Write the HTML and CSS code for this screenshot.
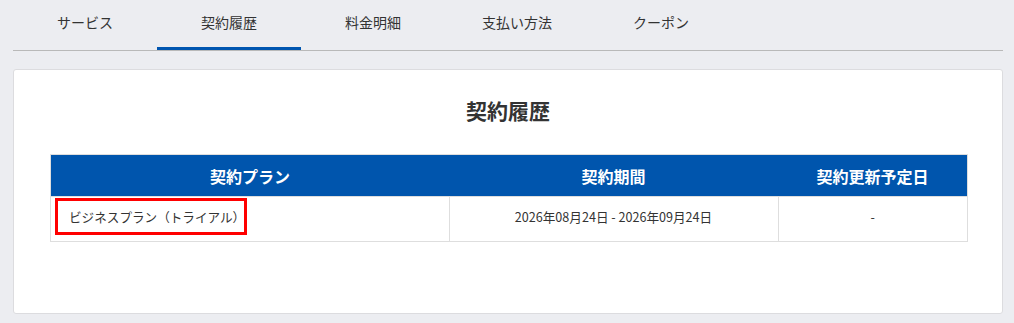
FILE: index.html
```html
<!DOCTYPE html>
<html lang="ja">
<head>
  <meta charset="utf-8">
  <link rel="stylesheet" href="styles.css">
  <title>契約履歴</title>
</head>
<body>
  <div class="page">
    <nav class="tabs">
      <a class="tab" href="#">サービス</a>
      <a class="tab active" href="#">契約履歴</a>
      <a class="tab" href="#">料金明細</a>
      <a class="tab" href="#">支払い方法</a>
      <a class="tab" href="#">クーポン</a>
    </nav>

    <div class="card">
      <h1>契約履歴</h1>
      <table class="history">
        <thead>
          <tr>
            <th class="col-plan">契約プラン</th>
            <th class="col-term">契約期間</th>
            <th class="col-renew">契約更新予定日</th>
          </tr>
        </thead>
        <tbody>
          <tr>
            <td class="plan"><span class="highlight">ビジネスプラン（トライアル）</span></td>
            <td>2026年08月24日 - 2026年09月24日</td>
            <td>-</td>
          </tr>
        </tbody>
      </table>
    </div>
  </div>
</body>
</html>
```

FILE: styles.css
```css
body {
  margin: 0;
  background-color: #ecedf1;
  color: #333;
  font-family: "Noto Sans CJK JP", "Noto Sans", sans-serif;
}

.page {
  padding: 0 11px 0 13px;
}

.tabs {
  display: flex;
  height: 50px;
  border-bottom: 1px solid #b9b9b9;
}

.tab {
  width: 144px;
  height: 47px;
  margin-bottom: -1px;
  line-height: 44px;
  text-align: center;
  font-size: 14px;
  color: #333;
  text-decoration: none;
  border-bottom: 3px solid transparent;
}

.tab.active {
  border-bottom-color: #0055b0;
}

.card {
  margin-top: 18px;
  height: 243px;
  background-color: #fff;
  border: 1px solid #dcdcdf;
  border-radius: 3px;
  padding: 0 36px;
}

h1 {
  margin: 25px 0 29px;
  font-size: 21px;
  line-height: 30px;
  text-align: center;
  font-weight: bold;
  color: #333;
}

.history {
  width: 916px;
  border-collapse: collapse;
  table-layout: fixed;
  border: 1px solid #dedede;
}

.history th {
  height: 41px;
  padding: 0;
  background-color: #0055ad;
  color: #fff;
  font-size: 16px;
  font-weight: bold;
  text-align: center;
}

.col-plan { width: 398px; }
.col-term { width: 329px; }
.col-renew { width: 189px; }

.history td {
  height: 45px;
  padding: 11px 5px 0;
  vertical-align: top;
  text-align: center;
  font-size: 12.6px;
  line-height: 18px;
  border: 1px solid #dedede;
  box-sizing: border-box;
}

.history td.plan {
  padding: 1px 4px 0;
  text-align: left;
}

.highlight {
  display: inline-block;
  width: 175px;
  height: 31px;
  line-height: 31px;
  padding: 0 0 0 11px;
  white-space: nowrap;
  border: 3px solid #f00;
  font-size: 12.6px;
}
```
